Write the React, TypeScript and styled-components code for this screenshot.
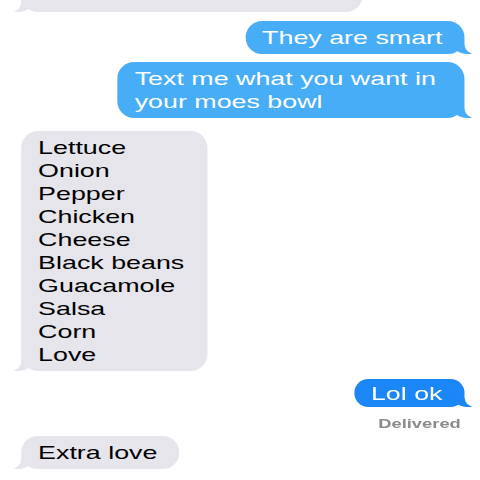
import React from "react";
import styled, { createGlobalStyle, css } from "styled-components";

const Global = createGlobalStyle`
  html, body { margin: 0; padding: 0; background: #ffffff; overflow: hidden; }
  body { width: 480px; height: 480px; font-family: "Liberation Sans", Arial, sans-serif; }
`;

const Screen = styled.div`
  width: 480px;
  height: 480px;
  overflow: hidden;
  background: #ffffff;
`;

const Thread = styled.div`
  width: 340px;
  box-sizing: border-box;
  padding: 0 10.6px 0 15px;
  display: flex;
  flex-direction: column;
  transform: scaleX(1.4118);
  transform-origin: 0 0;
`;

type Side = "in" | "out";
type Tone = "gray" | "light" | "strong";

const toneColor: Record<Tone, string> = {
  gray: "#e6e5eb",
  light: "#48adf7",
  strong: "#1b86f5",
};

const Bubble = styled.div<{ $side: Side; $tone: Tone; $gap: number; $pad?: number }>`
  position: relative;
  box-sizing: border-box;
  align-self: ${(p) => (p.$side === "out" ? "flex-end" : "flex-start")};
  max-width: 246px;
  margin-top: ${(p) => p.$gap}px;
  padding: ${(p) => p.$pad ?? 5}px 16px ${(p) => p.$pad ?? 5}px 12px;
  border-radius: 12px / 17px;
  font-size: 19px;
  line-height: 23px;
  background: ${(p) => toneColor[p.$tone]};
  color: ${(p) => (p.$tone === "gray" ? "#000000" : "#ffffff")};
  white-space: pre-line;

  &::before,
  &::after {
    content: "";
    position: absolute;
    bottom: 0;
    height: 16px;
  }
  &::before {
    width: 14px;
    background: ${(p) => toneColor[p.$tone]};
  }
  &::after {
    width: 8px;
    background: #ffffff;
  }

  ${(p) =>
    p.$side === "out"
      ? css`
          &::before {
            right: -5px;
            border-bottom-left-radius: 11px 13px;
          }
          &::after {
            right: -8px;
            border-bottom-left-radius: 7px 10px;
          }
        `
      : css`
          &::before {
            left: -5px;
            border-bottom-right-radius: 11px 13px;
          }
          &::after {
            left: -8px;
            border-bottom-right-radius: 7px 10px;
          }
        `}
`;

const Stub = styled(Bubble)`
  width: 242px;
  height: 44px;
  margin-top: -32px;
`;

const Status = styled.div`
  align-self: flex-end;
  margin-top: 9px;
  margin-right: 3px;
  font-size: 13px;
  line-height: 16px;
  font-weight: 700;
  color: #8a8a8f;
`;

const items = [
  "Lettuce",
  "Onion",
  "Pepper",
  "Chicken",
  "Cheese",
  "Black beans",
  "Guacamole",
  "Salsa",
  "Corn",
  "Love",
];

export default function App() {
  return (
    <Screen>
      <Global />
      <Thread>
        <Stub $side="in" $tone="gray" $gap={0} />
        <Bubble $side="out" $tone="light" $gap={9}>
          They are smart
        </Bubble>
        <Bubble $side="out" $tone="light" $gap={8}>
          Text me what you want in your moes bowl
        </Bubble>
        <Bubble $side="in" $tone="gray" $gap={13}>
          {items.join("\n")}
        </Bubble>
        <Bubble $side="out" $tone="strong" $gap={8} $pad={2.5}>
          Lol ok
        </Bubble>
        <Status>Delivered</Status>
        <Bubble $side="in" $tone="gray" $gap={4}>
          Extra love
        </Bubble>
      </Thread>
    </Screen>
  );
}
